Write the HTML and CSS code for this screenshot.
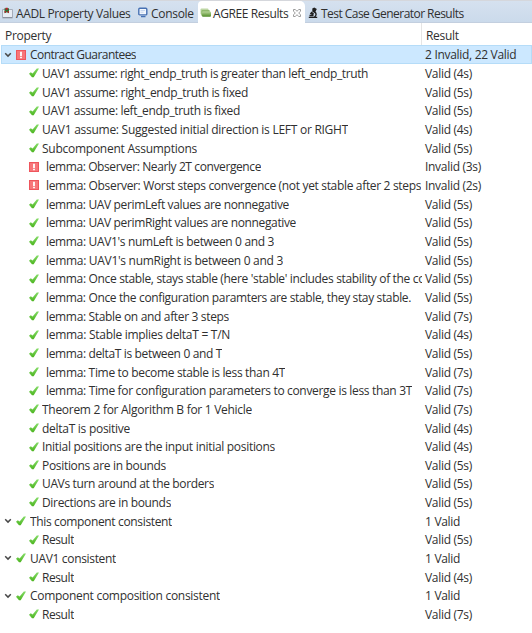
FILE: index.html
```
<!DOCTYPE html>
<html lang="en">
<head>
<meta charset="utf-8">
<title>AGREE Results</title>
<link rel="stylesheet" href="styles.css">
</head>
<body>
<svg class="defs" aria-hidden="true">
  <defs>
    <linearGradient id="green" x1="0" y1="0" x2="0" y2="1"><stop offset="0" stop-color="#85dc68"/><stop offset="1" stop-color="#4db520"/></linearGradient>
    <linearGradient id="folder" x1="0" y1="0" x2="0" y2="1"><stop offset="0" stop-color="#b9d69a"/><stop offset="1" stop-color="#4e8a25"/></linearGradient>
    <symbol id="ok" viewBox="0 0 10 10"><path d="M0 5.800 1.800 4.200 3.600 5.600 7.800.4H10L4.700 9.300H3Z" fill="url(#green)"/></symbol>
    <symbol id="bad" viewBox="0 0 10 10"><path d="M0 0h10v10H0z" fill="#ee555c"/><path d="M1 1h8v8H1z" fill="#f7767a"/><path d="M5 1.800v4.400M5 7v1.300" stroke="#fff" stroke-width="1.800"/></symbol>
    <symbol id="open" viewBox="0 0 8 6"><path d="M1.200 1.300 4 4.100 6.800 1.300" fill="none" stroke="#484848" stroke-width="1.500"/></symbol>
  </defs>
</svg>
<nav class="tabs">
  <div class="tab first">
    <svg class="ico" viewBox="0 0 11 12"><path d="M.5 2.500h10v8.500H.5z" fill="#e8edf5" stroke="#a5adba"/><path d="M1 10.500h9" stroke="#8a919e"/><path d="M2.500 1.200h4.500v5l-2-1-2.500 1z" fill="#317536"/><path d="M3.600.8h2.200v2H3.600zM2.600 4h1.400v1.800H2.600zM5.600 4H7v1.800H5.600z" fill="#b8202a"/></svg><span>AADL Property Values</span>
  </div>
  <div class="tab second">
    <svg class="ico" viewBox="0 0 10 12"><rect x=".8" y="1.300" width="8" height="6.600" rx="1" fill="#f2f7fd" stroke="#4771b3" stroke-width="1.400"/><path d="M2.500 3.500h4.500M2.500 5.200h3" stroke="#b4c9e8" stroke-width=".7"/><path d="M3 9.600h4.500" stroke="#4771b3" stroke-width="1.300"/></svg><span>Console</span>
  </div>
  <div class="tab active">
    <svg class="ico" viewBox="0 0 11 12"><rect x=".5" y="1.500" width="8" height="6" rx="1" fill="#bdd6a3"/><rect x="1.300" y="3" width="8.500" height="6" rx="1" fill="#8fb96c"/><rect x="2" y="4.500" width="9" height="5.300" rx="1" fill="url(#folder)"/></svg><span>AGREE Results</span>
    <svg class="close" viewBox="0 0 8 8"><path d="M.5.5h1.800L4 2.300 5.700.5H7.500v1.800L5.700 4l1.800 1.700v1.800H5.700L4 5.700 2.300 7.500H.5V5.700L2.300 4 .5 2.300Z" fill="#fff" stroke="#858585" stroke-width=".8"/></svg>
  </div>
  <div class="tab last">
    <svg class="ico" viewBox="0 0 10 12"><path d="m4.300 1.500 2-1 2.500 1.500-2 4-2.500-1.300z" fill="#202020"/><path d="M3.500 4.500 1.800 6.800 5 8.400l1-1.900" fill="#202020"/><path d="M6.500 5c2.200 1 2 3.500 0 5M.8 10.400h8.400M1.500 8.500h4" fill="none" stroke="#202020" stroke-width="1.400"/></svg><span>Test Case Generator Results</span>
  </div>
</nav>
<main class="tree">
  <div class="row head"><div class="name">Property</div><div class="result">Result</div></div>
  <div id="rows"></div>
</main>
<script src="rows.js"></script>
</body>
</html>
```
FILE: styles.css
```
body { margin: 0; width: 532px; height: 633px; overflow: hidden; background: #fff; color: #303030; font: 12px/18.67px "Open Sans", "Noto Sans", sans-serif; letter-spacing: -.3px; }
.defs { position: absolute; width: 0; height: 0; }
.tabs { display: flex; height: 23px; box-sizing: border-box; border-top: 1px solid #d5d7dc; border-bottom: 1px solid #c3cfdf; background: linear-gradient(#d5e1ef, #cbdaeb); white-space: nowrap; line-height: 25px; }
.tab { display: flex; align-items: center; box-sizing: border-box; flex: none; height: 23px; }
.tab span { height: 23px; }
.first { width: 136px; padding-left: 2px; }
.second { width: 62px; padding-left: 2px; }
.active { width: 107px; padding-left: 2px; background: #fff; border-radius: 4px 5px 0 0; letter-spacing: -.4px; }
.last { padding-left: 3px; letter-spacing: -.54px; }
.ico { width: 11px; height: 12px; margin-right: 2px; flex: none; }
.first .ico { margin-right: 3px; }
.first { letter-spacing: -.36px; }
.second .ico, .last .ico { width: 10px; }
.second .ico { margin-right: 3px; }
.last .ico { margin-right: 3px; }
.close { width: 8px; height: 8px; margin-left: 5px; }
.row { display: flex; height: 18.67px; line-height: 20px; white-space: pre; }
.head { height: 22.4px; line-height: 26px; }
.head .name { padding-left: 5px; border-right: 1px solid #e5e5e5; }
.head .result { padding-left: 4px; }
.name { width: 422px; box-sizing: border-box; overflow: hidden; display: flex; align-items: center; }
.head .name { display: block; }
.result { padding-left: 3px; flex: 1; }
.name .label { overflow: hidden; height: 18.67px; }
.group { padding-left: 4px; }
.leaf { padding-left: 29px; }
.mark { width: 10px; height: 10px; flex: none; margin-right: 3px; }
.lemma .mark { margin-right: 7px; }
.arrow { width: 8px; height: 6px; flex: none; margin-right: 4px; }
.group .mark { margin-right: 4px; }
.selected { background: #cce8ff; margin-left: 1px; box-shadow: inset 0 0 0 1px #b5dcf8; }
.selected .name { width: 421px; padding-left: 3px; }
```
FILE: rows.js
```
// kind, mark, label, result, label width in pixels
const rows = [
  ["group", "bad", "Contract Guarantees", "2 Invalid, 22 Valid", 106],
  ["leaf", "ok", "UAV1 assume: right_endp_truth is greater than left_endp_truth", "Valid (4s)", 326],
  ["leaf", "ok", "UAV1 assume: right_endp_truth is fixed", "Valid (5s)", 206],
  ["leaf", "ok", "UAV1 assume: left_endp_truth is fixed", "Valid (5s)", 198],
  ["leaf", "ok", "UAV1 assume: Suggested initial direction is LEFT or RIGHT", "Valid (4s)", 306],
  ["leaf", "ok", "Subcomponent Assumptions", "Valid (5s)", 155],
  ["leaf lemma", "bad", "lemma: Observer: Nearly 2T convergence", "Invalid (3s)", 215],
  ["leaf lemma", "bad", "lemma: Observer: Worst steps convergence (not yet stable after 2 steps", "Invalid (2s)", 375],
  ["leaf lemma", "ok", "lemma: UAV perimLeft values are nonnegative", "Valid (5s)", 243],
  ["leaf lemma", "ok", "lemma: UAV perimRight values are nonnegative", "Valid (5s)", 250],
  ["leaf lemma", "ok", "lemma: UAV1's numLeft is between 0 and 3", "Valid (5s)", 228],
  ["leaf lemma", "ok", "lemma: UAV1's numRight is between 0 and 3", "Valid (5s)", 237],
  ["leaf lemma", "ok", "lemma: Once stable, stays stable (here 'stable' includes stability of the co", "Valid (5s)", 379],
  ["leaf lemma", "ok", "lemma: Once the configuration paramters are stable, they stay stable.", "Valid (5s)", 365],
  ["leaf lemma", "ok", "lemma: Stable on and after 3 steps", "Valid (7s)", 183],
  ["leaf lemma", "ok", "lemma: Stable implies deltaT = T/N", "Valid (4s)", 184],
  ["leaf lemma", "ok", "lemma: deltaT is between 0 and T", "Valid (5s)", 176],
  ["leaf lemma", "ok", "lemma: Time to become stable is less than 4T", "Valid (7s)", 239],
  ["leaf lemma", "ok", "lemma: Time for configuration parameters to converge is less than 3T", "Valid (7s)", 366],
  ["leaf", "ok", "Theorem 2 for Algorithm B for 1 Vehicle", "Valid (7s)", 210],
  ["leaf", "ok", "deltaT is positive", "Valid (4s)", 88],
  ["leaf", "ok", "Initial positions are the input initial positions", "Valid (4s)", 233],
  ["leaf", "ok", "Positions are in bounds", "Valid (5s)", 124],
  ["leaf", "ok", "UAVs turn around at the borders", "Valid (5s)", 172],
  ["leaf", "ok", "Directions are in bounds", "Valid (5s)", 129],
  ["group", "ok", "This component consistent", "1 Valid", 142],
  ["leaf", "ok", "Result", "Valid (5s)", 32],
  ["group", "ok", "UAV1 consistent", "1 Valid", 86],
  ["leaf", "ok", "Result", "Valid (4s)", 32],
  ["group", "ok", "Component composition consistent", "1 Valid", 190],
  ["leaf", "ok", "Result", "Valid (7s)", 32]
];
const ruler = document.createElement("canvas").getContext("2d");
ruler.font = '12px "Open Sans"';
const spacing = (label, width) => ((width - ruler.measureText(label).width) / label.length).toFixed(3);
document.getElementById("rows").innerHTML = rows.map(([kind, mark, label, result, width], i) =>
  `<div class="row${i === 0 ? " selected" : ""}"><div class="name ${kind}">` +
  (kind === "group" ? '<svg class="arrow"><use href="#open"/></svg>' : "") +
  `<svg class="mark"><use href="#${mark}"/></svg><span class="label" style="letter-spacing:${spacing(label, width)}px">${label}</span></div><div class="result">${result}</div></div>`
).join("");
```
